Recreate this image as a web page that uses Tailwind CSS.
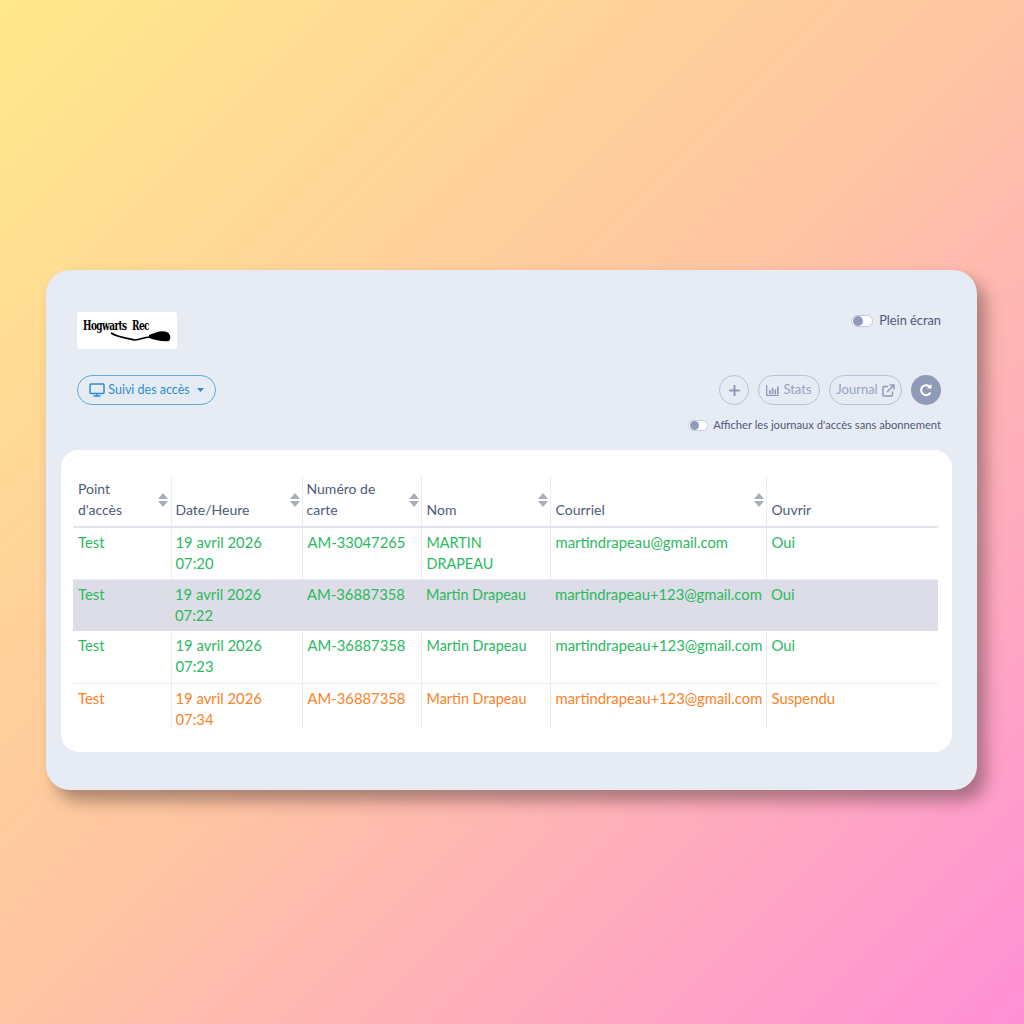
<!DOCTYPE html>
<html lang="en">
<head>
    <meta charset="UTF-8">
    <meta name="viewport" content="width=device-width, initial-scale=1.0">
    <title>Suivi des accès</title>
    <script src="https://cdn.jsdelivr.net/npm/@tailwindcss/browser@4"></script>
</head>
<body class="w-[1024px] h-[1024px] overflow-hidden bg-gradient-to-br from-[#ffe98a] via-[#ffc4a2] to-[#ff8fd6] font-['Lato','Noto_Sans',sans-serif]">
    <div class="pt-[270px] pl-[46px]">
        <div class="w-[931px] h-[520px] rounded-[24px] bg-[#e7ebf4] shadow-[9px_11px_16px_rgba(70,50,50,0.45)] pt-[42px] pl-[15px] pr-[25px]">
            <!-- top row -->
            <div class="flex justify-between pl-[16px] pr-[11px]">
                <div class="relative w-[100px] h-[37px] bg-white rounded-[3px]">
                    <span class="absolute left-[6px] top-[6px] whitespace-nowrap font-['DejaVu_Serif',serif] text-[9px] leading-[14px] tracking-[-0.6px] [word-spacing:3px] font-bold text-black scale-y-150">Hogwarts Rec</span>
                    <svg class="absolute inset-0 w-[100px] h-[37px]" viewBox="0 0 100 37">
                        <path d="M34 21 C40 25 48 26 58 28 C64 28 66 25 73 25" fill="none" stroke="#000" stroke-width="1.6"/>
                        <path d="M72 23 C78 21 84 18 90 20 C94 22 94 27 92 29 C86 30 78 28 72 26 Z" fill="#000"/>
                    </svg>
                </div>
                <div class="flex items-center gap-[6px] h-[18px] text-[12.8px] text-[#4f5a76]">
                    <span class="w-[22px] h-[12px] rounded-full bg-white border border-[#c5cbdc] flex items-center pl-[1px]"><span class="w-[10px] h-[10px] rounded-full bg-[#8f9bb8]"></span></span>
                    <span>Plein écran</span>
                </div>
            </div>
            <!-- toolbar -->
            <div class="flex justify-between items-center mt-[26px] pl-[16px] pr-[11px]">
                <button class="h-[30px] w-[139px] rounded-full border border-[#5cabd9] flex items-center justify-center gap-[3px] text-[12.5px] text-[#2b8fce]">
                    <svg class="w-[16px] h-[14px]" viewBox="0 0 16 14" fill="none" stroke="currentColor" stroke-width="1.5"><rect x="1" y="1" width="14" height="9.5" rx="1"/><path d="M4.5 13h7M8 10.5V13"/></svg>
                    <span>Suivi des accès</span>
                    <svg class="w-[7px] h-[4px] ml-[4px]" viewBox="0 0 7 4"><path d="M0 0h7L3.5 4z" fill="currentColor"/></svg>
                </button>
                <div class="flex items-center gap-[9px] text-[13px] text-[#98a3bf]">
                    <span class="w-[30px] h-[30px] rounded-full border border-[#b9c1d6] flex items-center justify-center">
                        <svg class="w-[11px] h-[11px]" viewBox="0 0 12 12"><path d="M6 1v10M1 6h10" stroke="#8f9bb8" stroke-width="2.2" stroke-linecap="round"/></svg>
                    </span>
                    <span class="w-[62px] h-[30px] rounded-full border border-[#b9c1d6] flex items-center justify-center gap-[4px]">
                        <svg class="w-[13px] h-[11px]" viewBox="0 0 13 11" fill="#8f9bb8"><path d="M0 0h1.3v9.7H13V11H0z"/><path d="M3 5h1.7v4H3zM5.7 3h1.7v6H5.7zM8.4 4.5h1.7V9H8.4zM11 1.5h1.7V9H11z"/></svg>
                        <span>Stats</span>
                    </span>
                    <span class="w-[73px] h-[30px] rounded-full border border-[#b9c1d6] flex items-center justify-center gap-[4px]">
                        <span>Journal</span>
                        <svg class="w-[13px] h-[13px]" viewBox="0 0 13 13" fill="none" stroke="#8f9bb8" stroke-width="1.5"><path d="M6 2.5H2a1 1 0 0 0-1 1V11a1 1 0 0 0 1 1h7.5a1 1 0 0 0 1-1V7.5"/><path d="M5 8l7-7M7.5 1H12v4.5"/></svg>
                    </span>
                    <span class="w-[30px] h-[30px] rounded-full bg-[#8f9bb8] flex items-center justify-center">
                        <svg class="w-[14px] h-[14px]" viewBox="0 0 14 14" fill="none" stroke="#fff" stroke-width="2"><path d="M11.5 9.5A5 5 0 1 1 11 4"/><path d="M12.5 1v4.5H8z" fill="#fff" stroke="none"/></svg>
                    </span>
                </div>
            </div>
            <div class="flex justify-end items-center gap-[5px] mt-[11px] pr-[11px] h-[18px] text-[11.2px] text-[#4f5a76]">
                <span class="w-[20px] h-[11px] rounded-full bg-white border border-[#c5cbdc] flex items-center pl-[1px]"><span class="w-[9px] h-[9px] rounded-full bg-[#8f9bb8]"></span></span>
                <span>Afficher les journaux d'accès sans abonnement</span>
            </div>
            <!-- table card -->
            <div class="mt-[16px] h-[302px] bg-white rounded-[18px] pt-[26px] pl-[12px]">
                <table class="table-fixed w-[865px] border-collapse text-[14.8px] leading-[21px]">
                    <colgroup>
                        <col class="w-[98px]"><col class="w-[131px]"><col class="w-[119px]"><col class="w-[129px]"><col class="w-[216px]"><col class="w-[172px]">
                    </colgroup>
                    <thead>
                        <tr class="h-[51px] text-left align-bottom text-[14px] text-[#4f5a76] border-b-2 border-[#e1e4ec]">
                            <th class="relative font-normal pl-[5px] pb-[6px] border-r border-[#e9ecf2]">Point<br>d'accès<svg class="absolute right-[3px] top-[17px] w-[10px] h-[14px]" viewBox="0 0 10 14" fill="#a9adb8"><path d="M5 0l5 6H0zM5 14l5-6H0z"/></svg></th>
                            <th class="relative font-normal pl-[4px] pb-[6px] border-r border-[#e9ecf2]">Date/Heure<svg class="absolute right-[2px] top-[17px] w-[10px] h-[14px]" viewBox="0 0 10 14" fill="#a9adb8"><path d="M5 0l5 6H0zM5 14l5-6H0z"/></svg></th>
                            <th class="relative font-normal pl-[4px] pb-[6px] border-r border-[#e9ecf2]">Numéro de<br>carte<svg class="absolute right-[2px] top-[17px] w-[10px] h-[14px]" viewBox="0 0 10 14" fill="#a9adb8"><path d="M5 0l5 6H0zM5 14l5-6H0z"/></svg></th>
                            <th class="relative font-normal pl-[5px] pb-[6px] border-r border-[#e9ecf2]">Nom<svg class="absolute right-[2px] top-[17px] w-[10px] h-[14px]" viewBox="0 0 10 14" fill="#a9adb8"><path d="M5 0l5 6H0zM5 14l5-6H0z"/></svg></th>
                            <th class="relative font-normal pl-[5px] pb-[6px] border-r border-[#e9ecf2]">Courriel<svg class="absolute right-[2px] top-[17px] w-[10px] h-[14px]" viewBox="0 0 10 14" fill="#a9adb8"><path d="M5 0l5 6H0zM5 14l5-6H0z"/></svg></th>
                            <th class="font-normal pl-[5px] pb-[6px]">Ouvrir</th>
                        </tr>
                    </thead>
                    <tbody class="align-top">
                        <tr class="h-[52px] text-[#2bb95f] border-b border-[#e9ecf2]">
                            <td class="pl-[5px] pt-[4px] border-r border-[#e9ecf2]">Test</td>
                            <td class="pl-[4px] pt-[4px] border-r border-[#e9ecf2]">19 avril 2026<br>07:20</td>
                            <td class="pl-[5px] pt-[4px] border-r border-[#e9ecf2]">AM-33047265</td>
                            <td class="pl-[5px] pt-[4px] border-r border-[#e9ecf2] text-[14.4px]">MARTIN<br>DRAPEAU</td>
                            <td class="pl-[5px] pt-[4px] border-r border-[#e9ecf2]">martindrapeau@gmail.com</td>
                            <td class="pl-[5px] pt-[4px]">Oui</td>
                        </tr>
                        <tr class="h-[52px] text-[#2bb95f] bg-[#dcdde6]">
                            <td class="pl-[5px] pt-[4px]">Test</td>
                            <td class="pl-[4px] pt-[4px]">19 avril 2026<br>07:22</td>
                            <td class="pl-[5px] pt-[4px]">AM-36887358</td>
                            <td class="pl-[5px] pt-[4px] text-[14.4px]">Martin Drapeau</td>
                            <td class="pl-[5px] pt-[4px]">martindrapeau+123@gmail.com</td>
                            <td class="pl-[5px] pt-[4px]">Oui</td>
                        </tr>
                        <tr class="h-[52px] text-[#2bb95f] border-b border-[#e9ecf2]">
                            <td class="pl-[5px] pt-[4px] border-r border-[#e9ecf2]">Test</td>
                            <td class="pl-[4px] pt-[4px] border-r border-[#e9ecf2]">19 avril 2026<br>07:23</td>
                            <td class="pl-[5px] pt-[4px] border-r border-[#e9ecf2]">AM-36887358</td>
                            <td class="pl-[5px] pt-[4px] border-r border-[#e9ecf2] text-[14.4px]">Martin Drapeau</td>
                            <td class="pl-[5px] pt-[4px] border-r border-[#e9ecf2]">martindrapeau+123@gmail.com</td>
                            <td class="pl-[5px] pt-[4px]">Oui</td>
                        </tr>
                        <tr class="text-[#fb8226]">
                            <td class="h-[44px] pl-[5px] pt-[4px] border-r border-[#e9ecf2]">Test</td>
                            <td class="pl-[4px] pt-[4px] border-r border-[#e9ecf2]"><div class="h-[40px]">19 avril 2026<br>07:34</div></td>
                            <td class="pl-[5px] pt-[4px] border-r border-[#e9ecf2]">AM-36887358</td>
                            <td class="pl-[5px] pt-[4px] border-r border-[#e9ecf2] text-[14.4px]">Martin Drapeau</td>
                            <td class="pl-[5px] pt-[4px] border-r border-[#e9ecf2]">martindrapeau+123@gmail.com</td>
                            <td class="pl-[5px] pt-[4px]">Suspendu</td>
                        </tr>
                    </tbody>
                </table>
            </div>
        </div>
    </div>
</body>
</html>
